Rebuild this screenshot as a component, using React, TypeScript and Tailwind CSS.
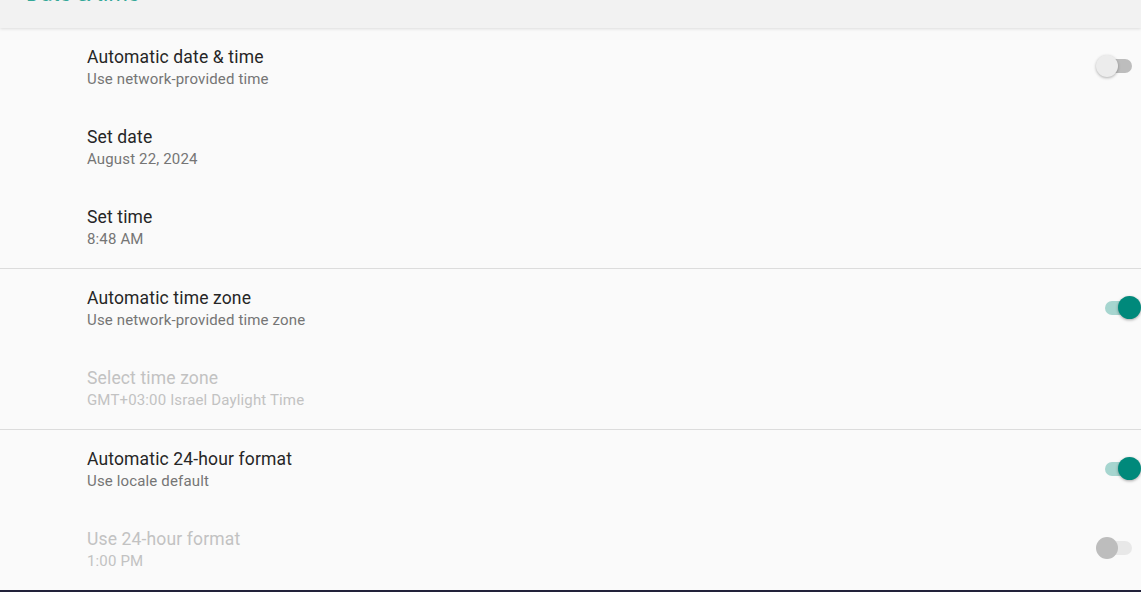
import React from "react";

type Row = {
  title: string;
  summary: string;
  disabled?: boolean;
  toggle?: "off" | "on" | "off-disabled";
};

const groups: Row[][] = [
  [
    { title: "Automatic date & time", summary: "Use network-provided time", toggle: "off" },
    { title: "Set date", summary: "August 22, 2024" },
    { title: "Set time", summary: "8:48 AM" },
  ],
  [
    { title: "Automatic time zone", summary: "Use network-provided time zone", toggle: "on" },
    { title: "Select time zone", summary: "GMT+03:00 Israel Daylight Time", disabled: true },
  ],
  [
    { title: "Automatic 24-hour format", summary: "Use locale default", toggle: "on" },
    { title: "Use 24-hour format", summary: "1:00 PM", disabled: true, toggle: "off-disabled" },
  ],
];

function Switch({ state }: { state: "off" | "on" | "off-disabled" }) {
  if (state === "on") {
    return (
      <div className="relative mb-[3px] flex h-[24px] w-[36px] items-center">
        <div className="h-[14px] w-[34px] rounded-full bg-[#a6d5cf]" />
        <div className="absolute right-0 top-0 h-[23px] w-[23px] rounded-full bg-[#00897b] shadow-[0_1px_3px_rgba(0,0,0,0.35)]" />
      </div>
    );
  }
  const disabled = state === "off-disabled";
  return (
    <div className="relative mb-[4px] mr-[9px] flex h-[24px] w-[36px] items-center justify-end">
      <div className={`h-[14px] w-[30px] rounded-full ${disabled ? "bg-[#e8e8e8]" : "bg-[#bdbdbd]"}`} />
      <div
        className={`absolute left-0 top-[1px] h-[22px] w-[22px] rounded-full ${
          disabled ? "bg-[#bdbdbd]" : "bg-[#ececec] shadow-[0_1px_3px_rgba(0,0,0,0.3)]"
        }`}
      />
    </div>
  );
}

export default function App() {
  return (
    <div className="flex h-[592px] w-[1141px] flex-col overflow-hidden bg-[#fafafa] font-['Roboto',sans-serif]">
      <header className="relative z-10 flex h-[28px] shrink-0 items-start overflow-hidden bg-[#f2f2f2] shadow-[0_1px_3px_rgba(0,0,0,0.12)]">
        <h1 className="-mt-[18px] pl-[26px] text-[22px] leading-[24px] text-[#34a898]">Date &amp; time</h1>
      </header>
      <main className="flex-1">
        {groups.map((group, gi) => (
          <section key={gi} className={gi > 0 ? "border-t border-[#dcdcdc]" : ""}>
            {group.map((row) => (
              <div key={row.title} className="flex h-[80px] items-center pl-[87px] pr-0">
                <div className="flex flex-1 flex-col">
                  <span
                    className={`text-[17.5px] leading-[22px] tracking-[0.15px] ${
                      row.disabled ? "text-[#c2c2c2]" : "text-[#262626]"
                    }`}
                  >
                    {row.title}
                  </span>
                  <span
                    className={`text-[15px] leading-[22px] tracking-[0.15px] ${
                      row.disabled ? "text-[#c2c2c2]" : "text-[#757575]"
                    }`}
                  >
                    {row.summary}
                  </span>
                </div>
                {row.toggle && <Switch state={row.toggle} />}
              </div>
            ))}
          </section>
        ))}
      </main>
      <div className="h-[3px] shrink-0 bg-[#22223a]" />
    </div>
  );
}
